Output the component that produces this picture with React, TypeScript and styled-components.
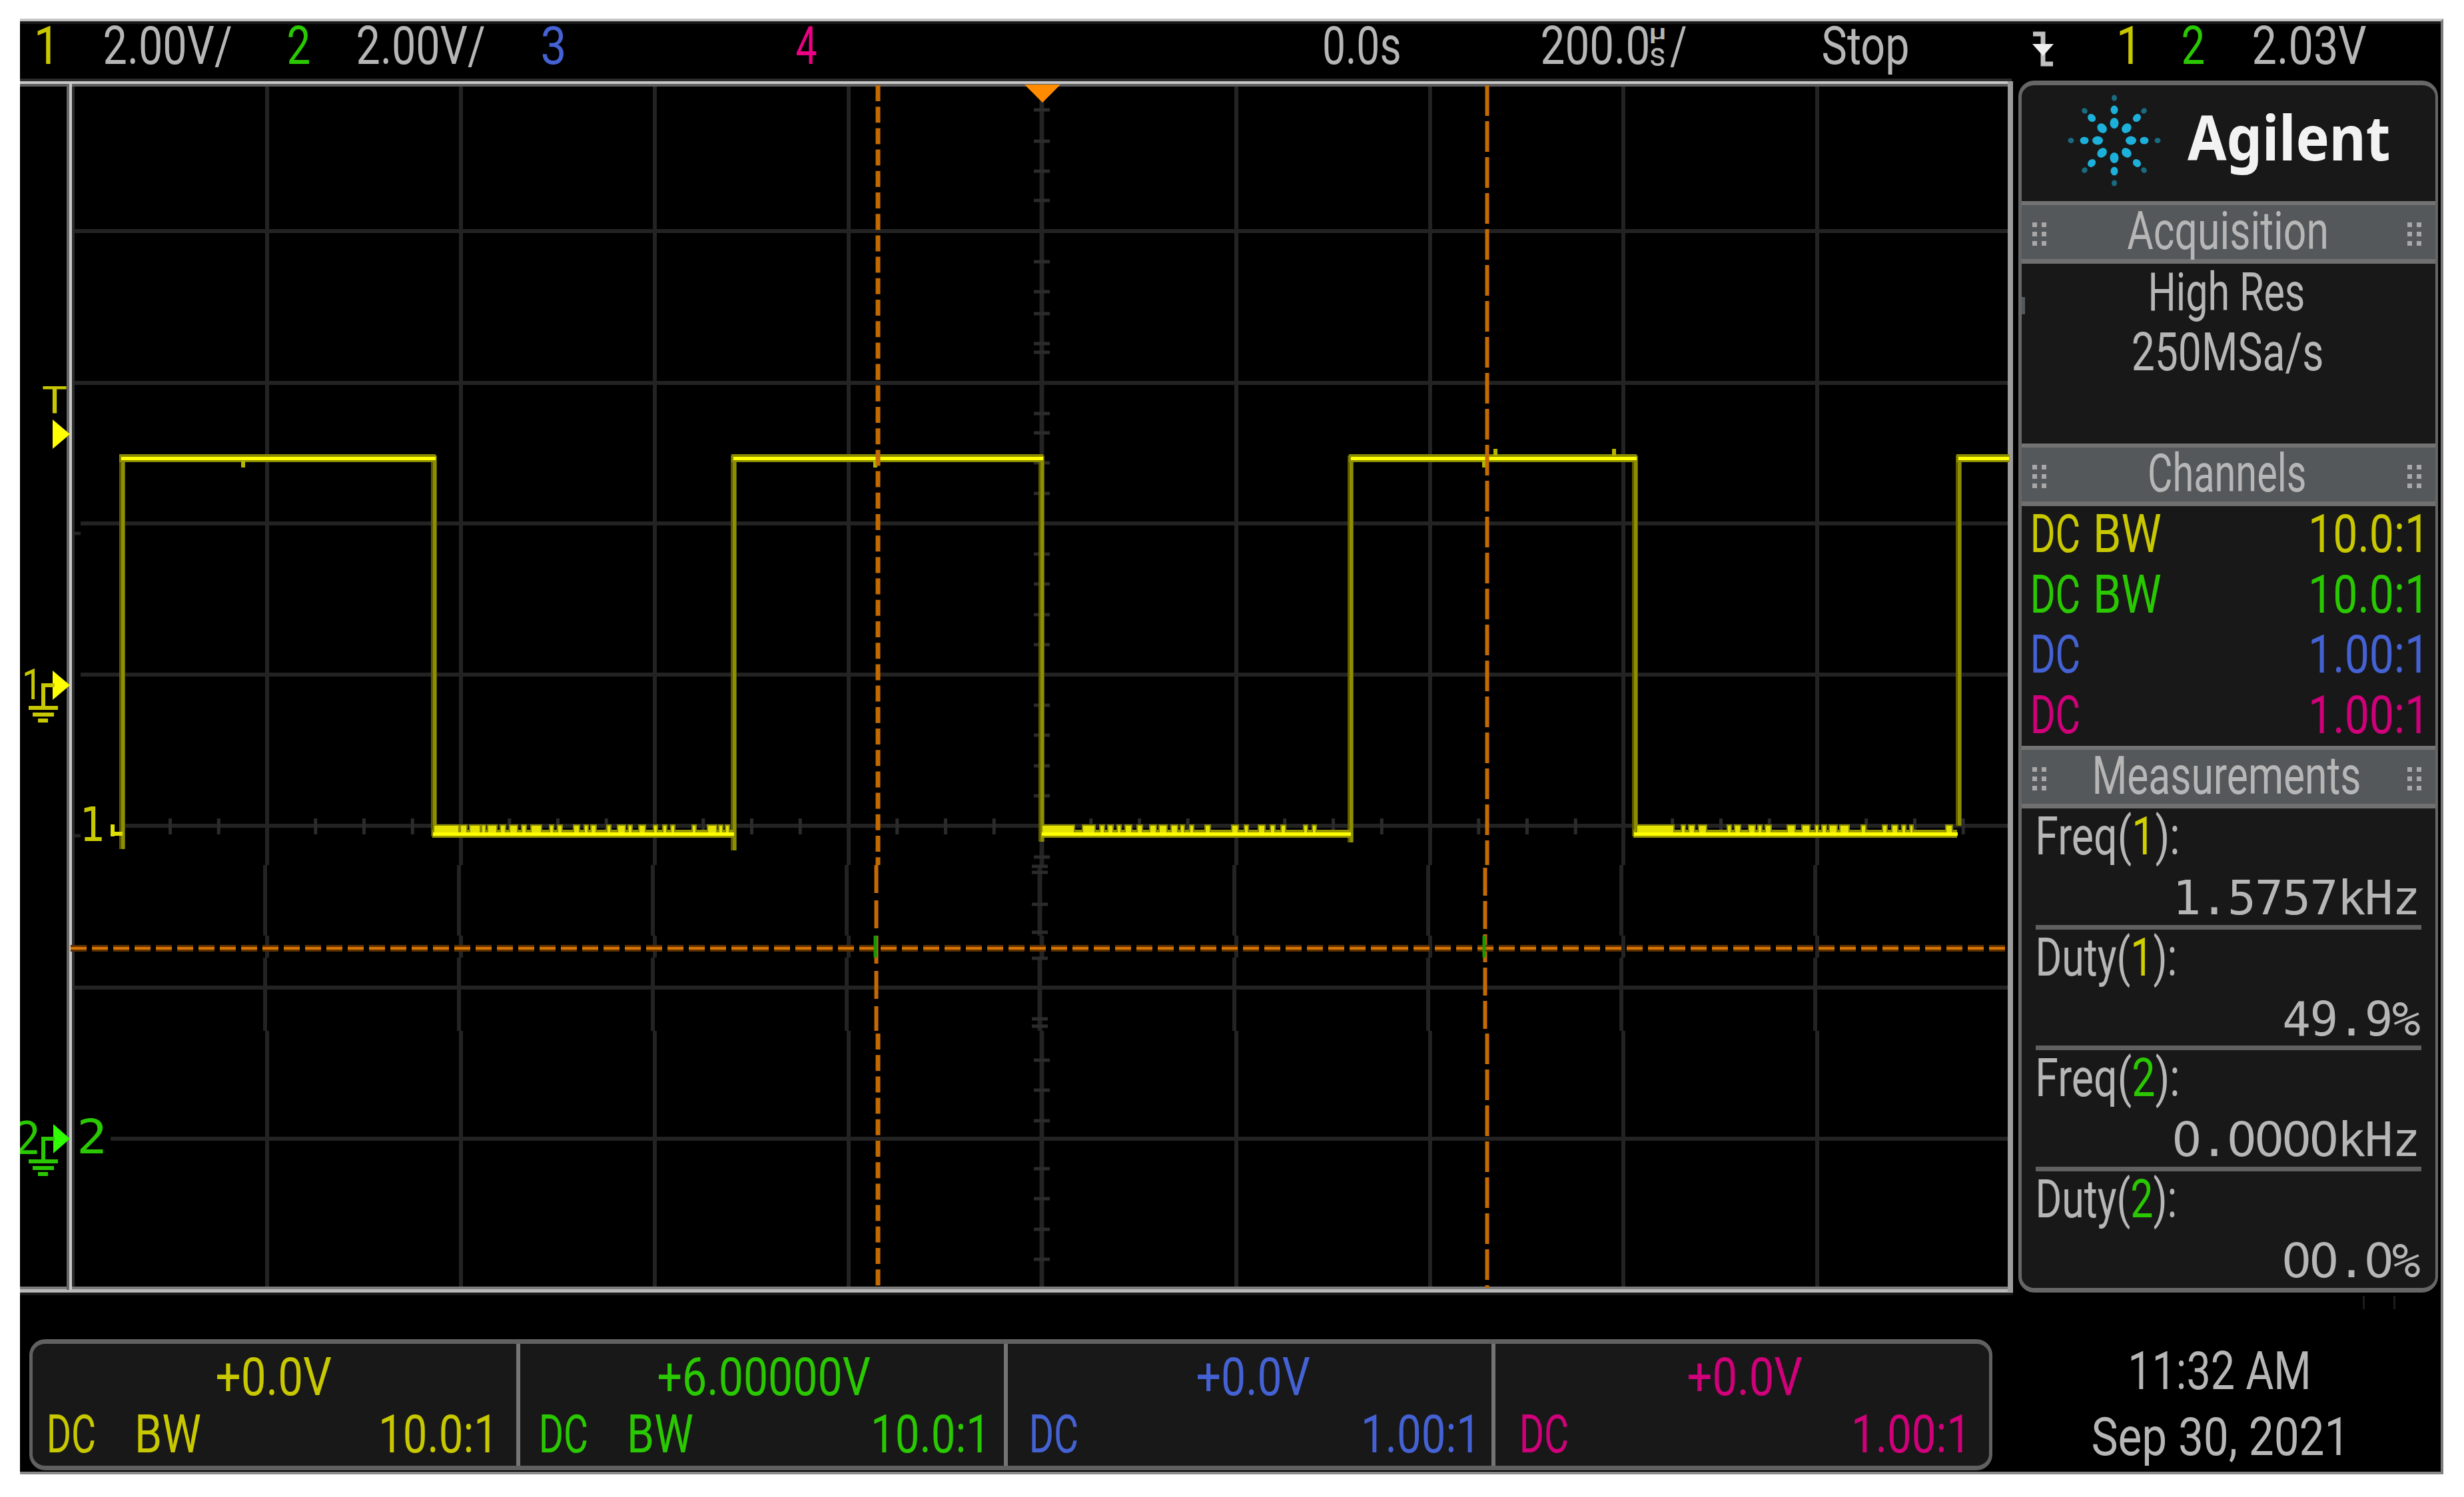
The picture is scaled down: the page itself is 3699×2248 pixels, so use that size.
import React, { useLayoutEffect, useState } from 'react';
import styled, { createGlobalStyle } from 'styled-components';

const YELLOW = '#c8c800';
const GREEN = '#2ac800';
const BLUE = '#4462d4';
const PINK = '#d0007a';
const TEXT = '#b6b6b6';

const GlobalStyle = createGlobalStyle`
  html, body { margin: 0; background: #fff; }
  body { width: 3699px; height: 2248px; overflow: hidden; }
  * { box-sizing: border-box; }
`;

/* ---------- condensed instrument lettering ---------- */

type Run = { text: string; color?: string };

const InkBox = styled.span<{ $w: number; $h: number; $size: number; $color: string; $family: string; $weight: number }>`
  display: block;
  flex: none;
  width: ${p => p.$w}px;
  height: ${p => p.$h}px;
  line-height: ${p => p.$h}px;
  font-family: ${p => p.$family};
  font-weight: ${p => p.$weight};
  font-size: ${p => p.$size}px;
  color: ${p => p.$color};
  white-space: pre;
`;

const InkText = styled.span`
  display: inline-block;
  transform-origin: 0 50%;
`;

const Tint = styled.span<{ $color?: string }>`
  color: ${p => p.$color ?? 'inherit'};
`;

interface InkProps {
  runs: string | Run[];
  w: number;
  h?: number;
  size?: number;
  color?: string;
  family?: string;
  weight?: number;
}

/* Lettering squeezed so that its ink is exactly w pixels wide. */
function Ink({ runs, w, h = 57, size = 80, color = TEXT, family = 'Roboto, "Liberation Sans", sans-serif', weight = 400 }: InkProps) {
  const [transform, setTransform] = useState('none');
  const parts: Run[] = typeof runs === 'string' ? [{ text: runs }] : runs;
  const whole = parts.map(p => p.text).join('');

  useLayoutEffect(() => {
    const ctx = document.createElement('canvas').getContext('2d');
    if (!ctx) return;
    ctx.font = `${weight} ${size}px ${family}`;
    const m = ctx.measureText(whole);
    const ink = m.actualBoundingBoxLeft + m.actualBoundingBoxRight;
    const s = w / ink;
    setTransform(`translateX(${m.actualBoundingBoxLeft * s}px) scaleX(${s})`);
  }, [whole, w, size, family, weight]);

  return (
    <InkBox $w={w} $h={h} $size={size} $color={color} $family={family} $weight={weight}>
      <InkText style={{ transform }}>
        {parts.map((p, i) => (
          <Tint key={i} $color={p.color}>{p.text}</Tint>
        ))}
      </InkText>
    </InkBox>
  );
}

/* ---------- frame ---------- */

const Page = styled.main`
  width: 3699px;
  height: 2248px;
  padding: 28px 0 0 30px;
  background: #fff;
`;

const Screen = styled.div`
  width: 3638px;
  height: 2186px;
  display: flex;
  flex-direction: column;
  background: #000;
  border-top: 4px solid #c4c4c4;
  border-right: 4px solid #7c7c7c;
  border-bottom: 4px solid #8a8a8a;
`;

const StatusBar = styled.header`
  height: 86px;
  flex: none;
  display: flex;
  align-items: flex-start;
  padding-top: 5px;
  border-top: 4px solid #1a1a1a;
`;

const Gap = styled.span<{ $w: number }>`
  flex: none;
  width: ${p => p.$w}px;
`;

const UnitStack = styled.span`
  display: flex;
  flex-direction: column;
  gap: 14px;
  flex: none;
  width: 24px;
`;

const Middle = styled.div`
  display: flex;
  height: 1828px;
  flex: none;
`;

/* ---------- scope plot ---------- */

const PlotSvg = styled.svg`
  display: block;
  flex: none;
  width: 2992px;
  height: 1828px;
`;

const V_LINES = [401, 692, 983, 1274, 1856, 2147, 2437, 2728];
const H_LINES: [number, number][] = [[347, 108], [575, 112], [786, 121], [1013, 121], [1240, 186], [1483, 108], [1710, 166]];
const V_TICKS = [165, 212, 257, 301, 393, 438, 471, 516, 529, 621, 650, 695, 741, 832, 877, 923, 968, 1059, 1104, 1150, 1195, 1287, 1301, 1310, 1358, 1400, 1439, 1530, 1541, 1592, 1637, 1683, 1755, 1800, 1846, 1891];

const NOISE: [number, number][] = [
  [652, 36], [692, 8], [706, 14], [724, 4], [733, 12], [752, 6], [766, 10], [784, 5], [798, 14], [826, 4], [838, 5], [862, 7], [878, 4],
  [888, 6], [912, 4], [928, 10], [944, 4], [960, 8], [982, 4], [996, 4], [1008, 4], [1040, 4], [1063, 12], [1080, 4], [1090, 4],
  [1565, 47], [1626, 17], [1652, 5], [1664, 6], [1678, 4], [1690, 8], [1708, 6], [1727, 8], [1741, 10], [1759, 8], [1773, 4], [1787, 4],
  [1810, 6], [1850, 8], [1869, 4], [1890, 8], [1908, 5], [1924, 5], [1958, 4], [1971, 4],
  [2458, 54], [2525, 4], [2536, 7], [2551, 10], [2594, 4], [2605, 7], [2626, 8], [2640, 4], [2651, 7], [2684, 10], [2706, 10], [2726, 3],
  [2736, 5], [2747, 10], [2763, 12], [2795, 5], [2827, 5], [2841, 7], [2856, 4], [2868, 3], [2922, 8],
];

const HIGHS: [number, number][] = [[182, 654], [1101, 1566], [2028, 2457], [2940, 3016]];
const LOWS: [number, number][] = [[650, 1102], [1564, 2028], [2453, 2939]];
const EDGES: [number, number][] = [[184, 1275], [652, 1256], [1102, 1277], [1564, 1264], [2028, 1265], [2455, 1256], [2941, 1240]];

/* Vertical rule whose middle stretches sit a few pixels to the left. */
const stepped = (x: number) =>
  `M${x} 130V1299M${x - 3} 1299V1405M${x} 1405V1438M${x - 3} 1438V1548M${x} 1548V1934`;

function Ground({ y, color }: { y: number; color: string }) {
  return (
    <g fill="none" stroke={color} strokeWidth={6}>
      <path d={`M82 ${y}H65V${y + 33}M43 ${y + 34}H87M49 ${y + 44}H81M57 ${y + 53}H72`} />
    </g>
  );
}

function Plot() {
  const ticks: number[] = [];
  for (let k = 1; k < 40; k++) if (k % 4 !== 0) ticks.push(110 + k * 72.75);
  const mono = '"DejaVu Sans Mono", monospace';
  return (
    <PlotSvg viewBox="30 118 2992 1828">
      <g fill="none" stroke="#232323" strokeWidth={6}>
        {V_LINES.map(x => <path key={x} d={stepped(x)} />)}
        <path d={stepped(1564)} strokeWidth={7} />
        {H_LINES.map(([y, x]) => <path key={y} d={`M${x} ${y}H3014`} />)}
        <path d="M108 801H121M108 1255H121" strokeWidth={5} />
      </g>
      <g stroke="#2b2b2b" fill="none">
        {ticks.map(x => <path key={x} d={`M${x} 1229V1253`} strokeWidth={5} />)}
        {V_TICKS.map(y => {
          const x = (y > 1299 && y < 1405) || (y > 1438 && y < 1548) ? 1561 : 1564;
          return <path key={y} d={`M${x - 12} ${y}H${x + 12}`} strokeWidth={5} />;
        })}
      </g>

      <g>
        <rect x={30} y={118} width={2990} height={4} fill="#2c2c2c" />
        <rect x={30} y={122} width={2992} height={4} fill="#c6c6c6" />
        <rect x={30} y={126} width={2992} height={4} fill="#5e5e5e" />
        <rect x={30} y={1932} width={2992} height={4} fill="#7c7c7c" />
        <rect x={30} y={1936} width={2992} height={5} fill="#b9b9b9" />
        <rect x={30} y={1941} width={2992} height={4} fill="#181818" />
        <rect x={100} y={126} width={4} height={1811} fill="#676767" />
        <rect x={104} y={126} width={4} height={1811} fill="#c8c8c8" />
        <rect x={108} y={130} width={4} height={1802} fill="#2c2c2c" />
        <rect x={3014} y={122} width={8} height={1818} fill="#9b9b9b" />
      </g>

      <g>
        {EDGES.map(([x, y]) => (
          <g key={x}>
            <rect x={x - 5} y={684} width={9} height={y - 684} fill="#5c5c00" />
            <rect x={x - 2} y={684} width={5} height={y - 684} fill="#8e8e00" />
          </g>
        ))}
        {HIGHS.map(([a, b]) => (
          <g key={a}>
            <rect x={a - 3} y={682} width={b - a + 3} height={12} fill="#8c8c00" />
            <rect x={a} y={686} width={b - a} height={5} fill="#ffff00" />
          </g>
        ))}
        {LOWS.map(([a, b]) => <rect key={a} x={a - 1} y={1246} width={b - a} height={12} fill="#9a9a00" />)}
        {NOISE.map(([x, w]) => (
          <g key={x}>
            <rect x={x - 2} y={1238} width={w + 4} height={12} fill="#8a8a00" />
            <rect x={x} y={1240} width={w} height={11} fill="#e4e400" />
          </g>
        ))}
        {LOWS.map(([a, b]) => <rect key={a} x={a} y={1250} width={b - a} height={5} fill="#ffff00" />)}
        <path d="M169 1238V1256M166 1252H184" stroke="#e0e000" strokeWidth={6} fill="none" />
        <path d="M365 692V702M2245 674V684M2423 674V684M1314 692V702M2228 692V702" stroke="#b4b400" strokeWidth={6} fill="none" />
      </g>

      <g fill="none" stroke="#c46a00">
        <path d="M1318 128V1299" strokeWidth={7} strokeDasharray="24 8.2" />
        <path d="M1315.500 1299V1548" strokeWidth={6} strokeDasharray="42 11" />
        <path d="M1318 1552V1934" strokeWidth={7} strokeDasharray="24 8.2" />
        <path d="M2232.500 128V1299" strokeWidth={6} strokeDasharray="46 8" />
        <path d="M2229.500 1303V1548" strokeWidth={6} strokeDasharray="42 8" />
        <path d="M2232.500 1552V1934" strokeWidth={6} strokeDasharray="46 8" />
        <path d="M106 1424H3014" stroke="#5a3000" strokeWidth={10} strokeDasharray="24 8" />
        <path d="M106 1424H3014" stroke="#d87400" strokeWidth={4} strokeDasharray="24 8" />
        <path d="M1314 1405V1438M2228 1405V1438" stroke="#169a00" strokeWidth={5} />
      </g>
      <path d="M1538 127H1592L1565 154Z" fill="#ff8c00" />

      <g fontFamily={mono}>
        <text x={63} y={620} fontSize={55} fill={YELLOW} textLength={38} lengthAdjust="spacingAndGlyphs">T</text>
        <text x={33} y={1050} fontSize={64} fill={YELLOW} textLength={30} lengthAdjust="spacingAndGlyphs" fontFamily="Roboto, sans-serif">1</text>
        <text x={119} y={1263} fontSize={72} fill={YELLOW} textLength={38} lengthAdjust="spacingAndGlyphs">1</text>
        <text x={23} y={1733} fontSize={68} fill={GREEN} textLength={38} lengthAdjust="spacingAndGlyphs">2</text>
        <text x={115} y={1732} fontSize={72} fill={GREEN} textLength={46} lengthAdjust="spacingAndGlyphs">2</text>
      </g>
      <path d="M79 630L105 652L79 674Z" fill="#ffff00" />
      <path d="M79 1007L105 1029L79 1051Z" fill="#ffff00" />
      <path d="M80 1688L105 1710L80 1732Z" fill="#2fff00" />
      <Ground y={1029} color={YELLOW} />
      <Ground y={1710} color={GREEN} />
    </PlotSvg>
  );
}

/* ---------- side panel ---------- */

const Sidebar = styled.aside`
  width: 630px;
  height: 1820px;
  margin: 3px 0 0 8px;
  flex: none;
  display: flex;
  flex-direction: column;
  background: #181818;
  border: 7px solid #666;
  border-left-width: 5px;
  border-right-width: 4px;
  border-radius: 24px;
  overflow: hidden;
`;

const Brand = styled.div`
  height: 174px;
  flex: none;
  display: flex;
  align-items: flex-start;
  padding: 8px 0 0 64px;
`;

const LogoSvg = styled.svg`
  width: 150px;
  height: 150px;
  flex: none;
`;

const BrandName = styled.div`
  padding: 35px 0 0 35px;
`;

const SectionHead = styled.div`
  height: 94px;
  flex: none;
  display: flex;
  justify-content: space-between;
  align-items: flex-start;
  padding: 11px 21px 0 16px;
  background: #54585a;
  border-top: 6px solid #737373;
  border-bottom: 7px solid #707070;
`;

const Grip = styled.span`
  display: grid;
  grid-template-columns: repeat(2, 7px);
  grid-auto-rows: 7px;
  gap: 7px;
  padding-top: 15px;
`;

const GripDot = styled.i`
  background: #a8a8a8;
`;

const SectionBody = styled.div<{ $h: number }>`
  height: ${p => p.$h}px;
  flex: none;
  display: flex;
  flex-direction: column;
`;

const Centered = styled.div<{ $top: number; $left: number }>`
  padding: ${p => p.$top}px 0 0 ${p => p.$left}px;
`;

const ScrollMark = styled.i`
  position: absolute;
  width: 5px;
  height: 26px;
  margin-top: 50px;
  background: #54585a;
`;

const ChannelRow = styled.div`
  height: 90.600px;
  flex: none;
  display: flex;
  justify-content: space-between;
  padding: 14px 22px 0 17px;
`;

const Coupling = styled.div`
  display: flex;
  gap: 26px;
`;

const Measure = styled.div`
  height: 181.700px;
  flex: none;
  margin: 0 21px;
  padding: 14px 0 0 4px;
  border-bottom: 7px solid #606060;
  &:last-child { border-bottom: 0; }
`;

const Readout = styled.div`
  display: flex;
  justify-content: flex-end;
  margin-top: 37px;
  height: 53px;
  padding-right: 2px;
`;

const Cell = styled.span<{ $zero: boolean }>`
  width: 41.200px;
  display: flex;
  justify-content: center;
  line-height: 53px;
  font-family: ${p => (p.$zero ? '"DejaVu Sans"' : '"DejaVu Sans Mono"')}, sans-serif;
  font-weight: 400;
  font-size: 71px;
  color: ${TEXT};
`;

function Header({ title, w }: { title: string; w: number }) {
  const grip = <Grip>{[0, 1, 2, 3, 4, 5].map(i => <GripDot key={i} />)}</Grip>;
  return (
    <SectionHead>
      {grip}
      <Ink runs={title} w={w} />
      {grip}
    </SectionHead>
  );
}

function Logo() {
  const dots: React.ReactNode[] = [];
  for (let i = 0; i < 8; i++) {
    const diag = i % 2 === 1;
    const horiz = i % 4 === 0;
    const radii = diag ? [26, 48, 63] : horiz ? [25, 45, 65] : [26, 46, 64];
    radii.forEach((r, k) =>
      dots.push(
        <ellipse key={`${i}-${k}`} cx={r} cy={0} rx={[8, 6.5, 4.5][k]} ry={[6.5, 5.5, 4][k]} opacity={k === 2 ? 0.55 : 1} transform={`rotate(${i * 45})`} />
      )
    );
  }
  return <LogoSvg viewBox="-75 -75 150 150" fill="#1cb0da">{dots}</LogoSvg>;
}

const CHANNELS = [
  { color: YELLOW, bw: true, ratio: '10.0:1' },
  { color: GREEN, bw: true, ratio: '10.0:1' },
  { color: BLUE, bw: false, ratio: '1.00:1' },
  { color: PINK, bw: false, ratio: '1.00:1' },
];

const MEASURES = [
  { name: 'Freq', ch: '1', color: '#d0d000', value: '1.5757kHz', w: 209 },
  { name: 'Duty', ch: '1', color: '#d0d000', value: '49.9%', w: 205 },
  { name: 'Freq', ch: '2', color: GREEN, value: '0.0000kHz', w: 209 },
  { name: 'Duty', ch: '2', color: GREEN, value: '00.0%', w: 205 },
];

/* ---------- bottom strip ---------- */

const Bottom = styled.footer`
  position: relative;
  flex: 1;
  display: flex;
  align-items: flex-start;
  padding: 65px 0 0 14px;
  &::before {
    content: '';
    position: absolute;
    top: 0;
    left: 3517px;
    width: 43px;
    height: 20px;
    border: solid #1c1c1c;
    border-width: 0 3px;
  }
`;

const Strip = styled.div`
  width: 2947px;
  height: 197px;
  display: flex;
  flex: none;
  background: #181818;
  border: 7px solid #606060;
  border-left-width: 5px;
  border-right-width: 5px;
  border-radius: 24px;
`;

const StripCell = styled.div<{ $pad: number }>`
  width: 732px;
  flex: none;
  padding: 22px 0 0 ${p => p.$pad}px;
  &:first-child { width: 726px; }
  & + & { border-left: 6px solid #747474; }
`;

const StripRow = styled.div<{ $indent: number; $top: number }>`
  display: flex;
  padding: ${p => p.$top}px 0 0 ${p => p.$indent}px;
`;

const Clock = styled.div`
  padding-top: 20px;
`;

const STRIP = [
  { color: YELLOW, offset: '+0.0V', w: 171, indent: 252, bw: true, ratio: '10.0:1', pad: 25 },
  { color: GREEN, offset: '+6.00000V', w: 317, indent: 176, bw: true, ratio: '10.0:1', pad: 32 },
  { color: BLUE, offset: '+0.0V', w: 168, indent: 249, bw: false, ratio: '1.00:1', pad: 36 },
  { color: PINK, offset: '+0.0V', w: 170, indent: 250, bw: false, ratio: '1.00:1', pad: 40 },
];

export default function App() {
  return (
    <Page>
      <GlobalStyle />
      <Screen>
        <StatusBar>
          <Gap $w={26} />
          <Ink runs="1" w={20} color={YELLOW} />
          <Gap $w={81} />
          <Ink runs="2.00V/" w={190} />
          <Gap $w={86} />
          <Ink runs="2" w={31} color={GREEN} />
          <Gap $w={73} />
          <Ink runs="2.00V/" w={190} />
          <Gap $w={87} />
          <Ink runs="3" w={32} color={BLUE} />
          <Gap $w={350} />
          <Ink runs="4" w={30} color="#ec0085" />
          <Gap $w={762} />
          <Ink runs="0.0s" w={113} />
          <Gap $w={214} />
          <Ink runs="200.0" w={159} />
          <Gap $w={4} />
          <UnitStack>
            <Ink runs="µ" w={21} h={15} size={32} weight={500} />
            <Ink runs="s" w={21} h={24} size={50} />
          </UnitStack>
          <Gap $w={5} />
          <Ink runs="/" w={24} />
          <Gap $w={206} />
          <Ink runs="Stop" w={127} />
          <Gap $w={186} />
          <svg width={36} height={60} viewBox="0 -3 36 60">
            <path d="M2 7H17V52H32" fill="none" stroke="#c0c0c0" strokeWidth={7} />
            <path d="M1 22H33L17 40Z" fill="#f0f0f0" />
          </svg>
          <Gap $w={96} />
          <Ink runs="1" w={20} color={YELLOW} />
          <Gap $w={75} />
          <Ink runs="2" w={31} color={GREEN} />
          <Gap $w={75} />
          <Ink runs="2.03V" w={169} />
        </StatusBar>

        <Middle>
          <Plot />
          <Sidebar>
            <Brand>
              <Logo />
              <BrandName>
                <Ink runs="Agilent" w={302} h={68} size={94} weight={700} color="#f2f2f2" family='"Noto Sans", sans-serif' />
              </BrandName>
            </Brand>
            <Header title="Acquisition" w={298} />
            <SectionBody $h={270}>
              <ScrollMark />
              <Centered $top={15} $left={194}><Ink runs="High Res" w={229} /></Centered>
              <Centered $top={33} $left={167}><Ink runs="250MSa/s" w={284} /></Centered>
            </SectionBody>
            <Header title="Channels" w={233} />
            <SectionBody $h={360}>
              {CHANNELS.map((c, i) => (
                <ChannelRow key={i}>
                  <Coupling>
                    <Ink runs="DC" w={69} color={c.color} />
                    {c.bw && <Ink runs="BW" w={97} color={c.color} />}
                  </Coupling>
                  <Ink runs={c.ratio} w={164} color={c.color} />
                </ChannelRow>
              ))}
            </SectionBody>
            <Header title="Measurements" w={397} />
            {MEASURES.map((m, i) => (
              <Measure key={i}>
                <Ink runs={[{ text: `${m.name}(` }, { text: m.ch, color: m.color }, { text: '):' }]} w={m.w} />
                <Readout>
                  {m.value.split('').map((ch, k) => <Cell key={k} $zero={ch === '0'}>{ch}</Cell>)}
                </Readout>
              </Measure>
            ))}
          </Sidebar>
        </Middle>

        <Bottom>
          <Strip>
            {STRIP.map((c, i) => (
              <StripCell key={i} $pad={c.pad}>
                <StripRow $top={0} $indent={c.indent}><Ink runs={c.offset} w={c.w} color={c.color} /></StripRow>
                <StripRow $top={29} $indent={0}>
                  <Ink runs="DC" w={68} color={c.color} />
                  <Gap $w={65} />
                  {c.bw ? <Ink runs="BW" w={94} color={c.color} /> : <Gap $w={94} />}
                  <Gap $w={272} />
                  <Ink runs={c.ratio} w={162} color={c.color} />
                </StripRow>
              </StripCell>
            ))}
          </Strip>
          <Clock>
            <Centered $top={0} $left={208}><Ink runs="11:32 AM" w={266} /></Centered>
            <Centered $top={42} $left={151}><Ink runs="Sep 30, 2021" w={372} /></Centered>
          </Clock>
        </Bottom>
      </Screen>
    </Page>
  );
}
